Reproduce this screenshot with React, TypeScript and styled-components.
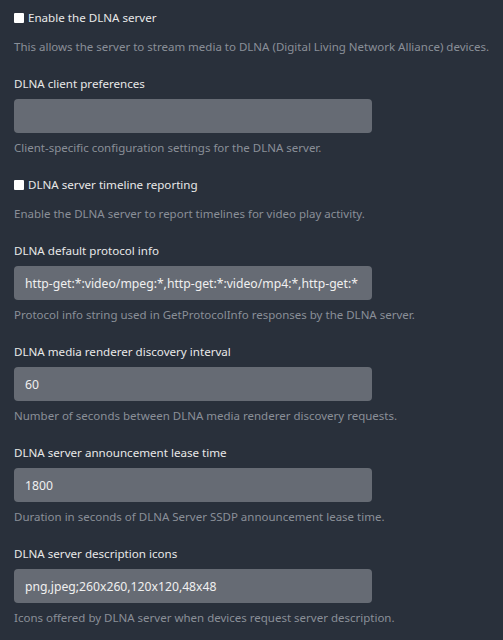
import React from 'react';
import styled, { createGlobalStyle } from 'styled-components';

const GlobalStyle = createGlobalStyle`
  html, body {
    margin: 0;
    padding: 0;
    background-color: #29303b;
  }
  body {
    font-family: 'Noto Sans', 'Open Sans', sans-serif;
    color: #e0e0e0;
  }
`;

const Page = styled.div`
  display: flex;
  flex-direction: column;
  gap: 19px;
  padding: 9px 4px 0 14px;
  min-height: 640px;
  box-sizing: border-box;
  background-color: #29303b;
`;

const Group = styled.div`
  display: flex;
  flex-direction: column;
`;

const CheckRow = styled.label`
  display: flex;
  align-items: center;
  gap: 4px;
  font-size: 11.6px;
  line-height: 18px;
  color: #e8e8e8;
`;

const Box = styled.span`
  display: inline-block;
  width: 10px;
  height: 10px;
  background-color: #ffffff;
  border-radius: 1px;
`;

const Label = styled.div`
  font-size: 11.6px;
  line-height: 18px;
  color: #e8e8e8;
  margin-bottom: 6px;
`;

const Field = styled.input`
  width: 358px;
  height: 34px;
  box-sizing: border-box;
  border: none;
  outline: none;
  background-color: #666b74;
  border-radius: 4px;
  padding: 0 10px 0 11px;
  margin: 0;
  font-family: 'Noto Sans', 'Open Sans', sans-serif;
  font-size: 12.2px;
  color: #f0f0f0;
`;

const Description = styled.div<{ $gap: number }>`
  font-size: 11.5px;
  line-height: 18px;
  color: #8a8f98;
  margin-top: ${(props) => props.$gap}px;
`;

interface CheckProps {
  label: string;
  help: string;
}

function CheckSetting({ label, help }: CheckProps): JSX.Element {
  return (
    <Group>
      <CheckRow>
        <Box />
        {label}
      </CheckRow>
      <Description $gap={11}>{help}</Description>
    </Group>
  );
}

interface TextProps {
  label: string;
  value: string;
  help: string;
}

function TextSetting({ label, value, help }: TextProps): JSX.Element {
  return (
    <Group>
      <Label>{label}</Label>
      <Field type="text" value={value} readOnly />
      <Description $gap={6}>{help}</Description>
    </Group>
  );
}

export default function App(): JSX.Element {
  return (
    <>
      <GlobalStyle />
      <Page>
        <CheckSetting
          label="Enable the DLNA server"
          help="This allows the server to stream media to DLNA (Digital Living Network Alliance) devices."
        />
        <TextSetting
          label="DLNA client preferences"
          value=""
          help="Client-specific configuration settings for the DLNA server."
        />
        <CheckSetting
          label="DLNA server timeline reporting"
          help="Enable the DLNA server to report timelines for video play activity."
        />
        <TextSetting
          label="DLNA default protocol info"
          value="http-get:*:video/mpeg:*,http-get:*:video/mp4:*,http-get:*"
          help="Protocol info string used in GetProtocolInfo responses by the DLNA server."
        />
        <TextSetting
          label="DLNA media renderer discovery interval"
          value="60"
          help="Number of seconds between DLNA media renderer discovery requests."
        />
        <TextSetting
          label="DLNA server announcement lease time"
          value="1800"
          help="Duration in seconds of DLNA Server SSDP announcement lease time."
        />
        <TextSetting
          label="DLNA server description icons"
          value="png,jpeg;260x260,120x120,48x48"
          help="Icons offered by DLNA server when devices request server description."
        />
      </Page>
    </>
  );
}
